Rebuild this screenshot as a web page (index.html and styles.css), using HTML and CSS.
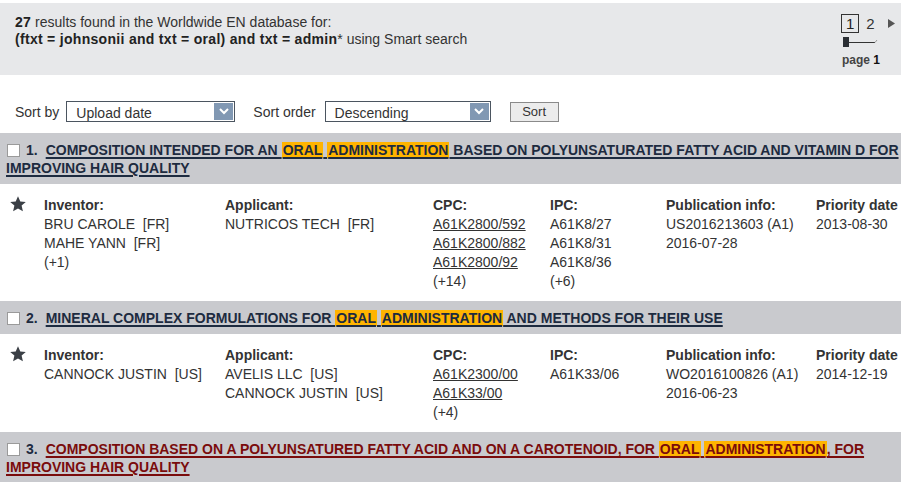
FILE: index.html
```html
<!DOCTYPE html>
<html lang="en">
<head>
<meta charset="utf-8">
<title>Results</title>
<link rel="stylesheet" href="styles.css">
</head>
<body>
<div class="summary">
  <div class="query">
    <div><b>27</b> results found in the Worldwide EN database for:</div>
    <div><b>(ftxt = johnsonii and txt = oral) and txt = admin</b>* using Smart search</div>
  </div>
  <div class="pager">
    <div class="pages">
      <span class="cur">1</span>
      <span class="pg">2</span>
      <svg class="next" width="7" height="9" viewBox="0 0 7 9"><polygon points="0,0 7,4.5 0,9" fill="#555"/></svg>
    </div>
    <svg class="slider" width="36" height="12" viewBox="0 0 36 12">
      <rect x="1" y="1" width="6" height="10" fill="#2a2e34"/>
      <line x1="7" y1="6.5" x2="33" y2="6.5" stroke="#333" stroke-width="1"/>
      <line x1="33" y1="6.5" x2="35" y2="4" stroke="#999" stroke-width="1"/>
    </svg>
    <div class="pagelabel">page <span>1</span></div>
  </div>
</div>

<div class="sortbar">
  <span class="lbl">Sort by</span>
  <div class="select s1"><span>Upload date</span><i class="arrow"><svg width="10" height="7" viewBox="0 0 10 7"><polyline points="1,1 5,5 9,1" fill="none" stroke="#fff" stroke-width="2"/></svg></i></div>
  <span class="lbl lbl2">Sort order</span>
  <div class="select s2"><span>Descending</span><i class="arrow"><svg width="10" height="7" viewBox="0 0 10 7"><polyline points="1,1 5,5 9,1" fill="none" stroke="#fff" stroke-width="2"/></svg></i></div>
  <button class="btn">Sort</button>
</div>

<div class="result">
  <div class="rhead"><span class="chk"></span><span class="num">1.</span><a class="title" href="#">COMPOSITION INTENDED FOR AN <span class="hl">ORAL</span> <span class="hl">ADMINISTRATION</span> BASED ON POLYUNSATURATED FATTY ACID AND VITAMIN D FOR IMPROVING HAIR QUALITY</a></div>
  <div class="rbody">
    <div class="starcell"><svg width="16" height="16" viewBox="0 0 16 16"><polygon points="8,0.3 10.3,5.4 15.8,5.9 11.6,9.6 12.9,15.3 8,12.4 3.1,15.3 4.4,9.6 0.2,5.9 5.7,5.4" fill="#3b4046"/></svg></div>
    <div class="col"><b>Inventor:</b><span>BRU CAROLE &nbsp;[FR]</span><span>MAHE YANN &nbsp;[FR]</span><span>(+1)</span></div>
    <div class="col"><b>Applicant:</b><span>NUTRICOS TECH &nbsp;[FR]</span></div>
    <div class="col"><b>CPC:</b><a href="#">A61K2800/592</a><a href="#">A61K2800/882</a><a href="#">A61K2800/92</a><span>(+14)</span></div>
    <div class="col"><b>IPC:</b><span>A61K8/27</span><span>A61K8/31</span><span>A61K8/36</span><span>(+6)</span></div>
    <div class="col"><b>Publication info:</b><span>US2016213603 (A1)</span><span>2016-07-28</span></div>
    <div class="col"><b>Priority date</b><span>2013-08-30</span></div>
  </div>
</div>

<div class="result">
  <div class="rhead"><span class="chk"></span><span class="num">2.</span><a class="title" href="#">MINERAL COMPLEX FORMULATIONS FOR <span class="hl">ORAL</span> <span class="hl">ADMINISTRATION</span> AND METHODS FOR THEIR USE</a></div>
  <div class="rbody">
    <div class="starcell"><svg width="16" height="16" viewBox="0 0 16 16"><polygon points="8,0.3 10.3,5.4 15.8,5.9 11.6,9.6 12.9,15.3 8,12.4 3.1,15.3 4.4,9.6 0.2,5.9 5.7,5.4" fill="#3b4046"/></svg></div>
    <div class="col"><b>Inventor:</b><span>CANNOCK JUSTIN &nbsp;[US]</span></div>
    <div class="col"><b>Applicant:</b><span>AVELIS LLC &nbsp;[US]</span><span>CANNOCK JUSTIN &nbsp;[US]</span></div>
    <div class="col"><b>CPC:</b><a href="#">A61K2300/00</a><a href="#">A61K33/00</a><span>(+4)</span></div>
    <div class="col"><b>IPC:</b><span>A61K33/06</span></div>
    <div class="col"><b>Publication info:</b><span>WO2016100826 (A1)</span><span>2016-06-23</span></div>
    <div class="col"><b>Priority date</b><span>2014-12-19</span></div>
  </div>
</div>

<div class="result">
  <div class="rhead"><span class="chk"></span><span class="num">3.</span><a class="title visited" href="#">COMPOSITION BASED ON A POLYUNSATURED FATTY ACID AND ON A CAROTENOID, FOR <span class="hl">ORAL</span> <span class="hl">ADMINISTRATION</span>, FOR IMPROVING HAIR QUALITY</a></div>
</div>
</body>
</html>
```
FILE: styles.css
```css
html, body {
  margin: 0;
  padding: 0;
  background: #fff;
}
body {
  font-family: "Liberation Sans", Arial, sans-serif;
  font-size: 14px;
  color: #333;
  width: 901px;
  overflow: hidden;
}
.summary {
  margin-top: 3px;
  height: 72px;
  box-sizing: border-box;
  background: #e7e8ea;
  padding: 11px 8px 0 15px;
  display: flex;
  justify-content: space-between;
  line-height: 17px;
}
.query b { color: #222; letter-spacing: 0.3px; }
.pager {
  display: flex;
  flex-direction: column;
  align-items: flex-start;
  width: 51px;
}
.pages {
  display: flex;
  align-items: center;
  height: 18px;
  margin-left: -1px;
}
.cur {
  border: 1px solid #333;
  padding: 0 4px;
  line-height: 17px;
  font-size: 15px;
  color: #222;
}
.pg {
  margin-left: 7px;
  font-size: 15px;
  color: #333;
}
.next { margin-left: 13px; }
.slider { margin-top: 4px; }
.pagelabel {
  margin-top: 5px;
  font-size: 12px;
  font-weight: bold;
  color: #444;
  line-height: 14px;
}
.pagelabel span { color: #111; }

.sortbar {
  display: flex;
  align-items: center;
  margin-top: 26px;
  padding-left: 15px;
  height: 21px;
}
.lbl { margin-right: 7px; }
.lbl2 { margin-left: 18px; margin-right: 9px; }
.select {
  box-sizing: border-box;
  height: 21px;
  border: 1px solid #4b5560;
  background: #fff;
  display: flex;
  align-items: center;
  justify-content: space-between;
  padding: 0 1px 0 9px;
}
.select span { padding-top: 2px; }
.s1 { width: 169px; }
.s2 { width: 166px; }
.arrow {
  width: 19px;
  height: 17px;
  background: #8198b3;
  display: flex;
  align-items: center;
  justify-content: center;
}
.btn {
  margin-left: 19px;
  width: 49px;
  height: 20px;
  box-sizing: border-box;
  border: 1px solid #8a8a8a;
  background: #ececec;
  font-family: "Liberation Sans", Arial, sans-serif;
  font-size: 13px;
  color: #333;
  padding: 0;
}

.sortbar + .result { margin-top: 11px; }
.rhead {
  background: #c9cace;
  padding: 8px 0 7px 6px;
  line-height: 18px;
  font-weight: bold;
}
.chk {
  display: inline-block;
  box-sizing: border-box;
  width: 13px;
  height: 13px;
  background: #fff;
  border: 1px solid #9a9a9a;
  margin-left: 1px;
  vertical-align: -2px;
}
.num {
  color: #1d2b40;
  margin-left: 6px;
  margin-right: 8px;
}
.title {
  color: #1d2b40;
  text-decoration: underline;
  text-decoration-thickness: 2px;
  text-underline-offset: 2px;
}
.title.visited { color: #7a0c0c; }
.hl {
  background: #ffb400;
  padding: 0 1px;
}
.rbody {
  display: grid;
  grid-template-columns: 44px 181px 208px 117px 116px 150px auto;
  padding: 12px 0 10px 0;
  line-height: 19px;
}
.starcell { padding-left: 10px; padding-top: 0; }
.starcell svg { display: block; }
.col {
  display: flex;
  flex-direction: column;
  white-space: nowrap;
}
.col b { color: #333; }
.col a { color: #333; text-decoration: underline; align-self: flex-start; }
```
